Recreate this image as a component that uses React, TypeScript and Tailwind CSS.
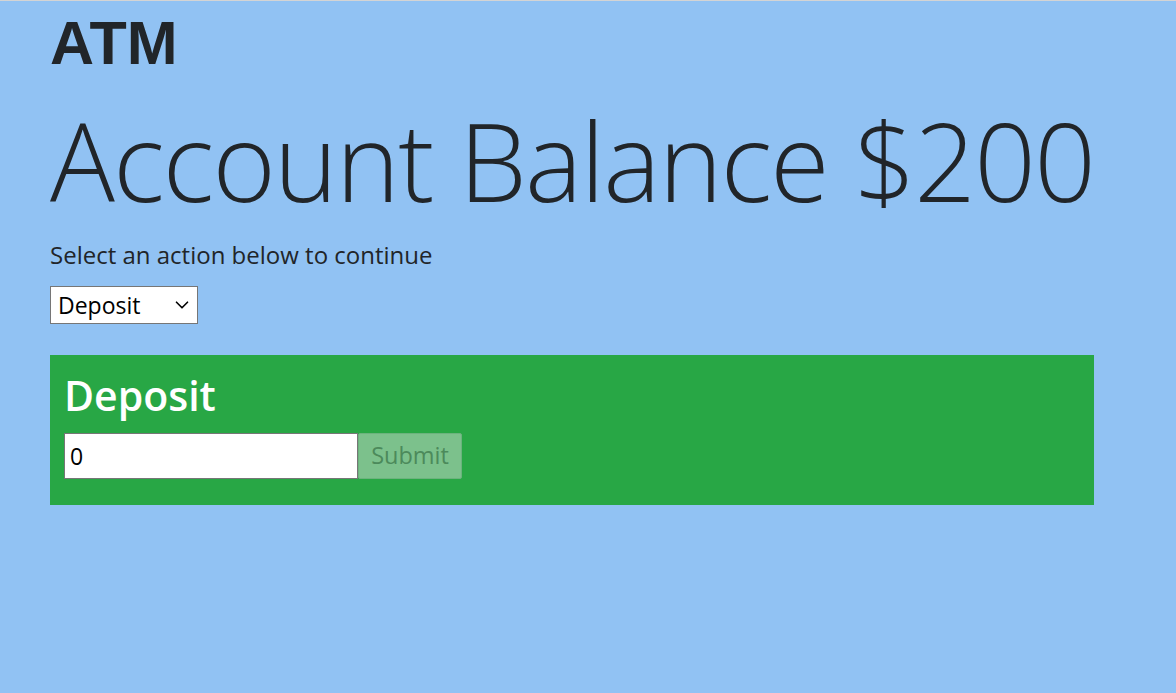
import { useState } from "react";
import { ChevronDown } from "lucide-react";

export default function App() {
  const [action, setAction] = useState("Deposit");
  const [amount, setAmount] = useState("0");

  return (
    <div className="min-h-[693px] bg-[#91c2f3] border-t border-[#d4d4d4] text-[#212529] font-['Open_Sans',sans-serif]">
      <div className="w-[1044px] ml-[50px]">
        <h1 className="pt-[6px] text-[61px] leading-[72px] font-bold font-['Liberation_Sans',Arial,sans-serif]">
          ATM
        </h1>
        <h2 className="mt-[18px] text-[108px] leading-[128px] font-light tracking-[-1.7px] whitespace-nowrap">
          Account Balance $200
        </h2>
        <p className="mt-[15px] text-[24px] leading-[30px]">
          Select an action below to continue
        </p>
        <div className="relative mt-[16px] w-[148px] h-[38px]">
          <select
            value={action}
            onChange={(e) => setAction(e.target.value)}
            className="w-full h-full appearance-none bg-white border border-[#767676] pl-[7px] text-[23px] text-black outline-none"
          >
            <option>Deposit</option>
            <option>Withdraw</option>
          </select>
          <ChevronDown
            className="absolute right-[5px] top-[8px] w-[22px] h-[22px] text-black pointer-events-none"
            strokeWidth={1.8}
          />
        </div>
        <div className="mt-[31px] h-[150px] bg-[#28a745] px-[14px] pt-[14px]">
          <h3 className="text-[41px] leading-[52px] font-semibold text-white">
            {action}
          </h3>
          <div className="mt-[12px] flex">
            <input
              value={amount}
              onChange={(e) => setAmount(e.target.value)}
              className="w-[294px] h-[46px] bg-white border border-[#767676] px-[5px] text-[23px] text-black outline-none"
            />
            <button
              disabled
              className="w-[104px] h-[46px] bg-[#7cc18c] border border-[#6bb37d] rounded-[2px] text-[23.5px] text-[#4c8a5b]"
            >
              Submit
            </button>
          </div>
        </div>
      </div>
    </div>
  );
}
